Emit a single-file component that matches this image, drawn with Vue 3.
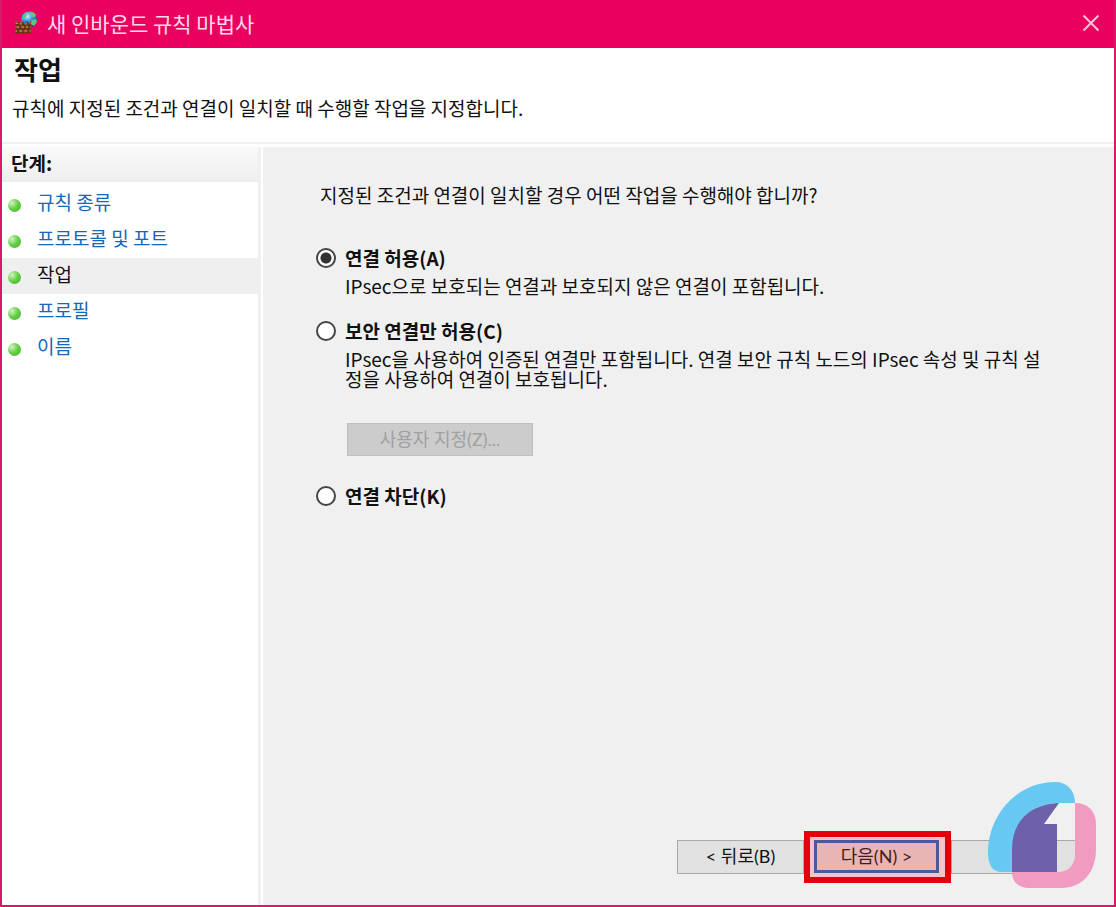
<script setup>
import { ref } from 'vue'

const steps = ['규칙 종류', '프로토콜 및 포트', '작업', '프로필', '이름']
const current = ref(2)
const action = ref('allow')
</script>

<template>
  <div class="window">
    <header class="titlebar">
      <svg class="app-icon" viewBox="0 0 24 24" aria-hidden="true">
        <defs>
          <radialGradient id="globe" cx="0.4" cy="0.3" r="0.75">
            <stop offset="0" stop-color="#c8f0ff" />
            <stop offset="0.4" stop-color="#3a9be0" />
            <stop offset="1" stop-color="#123f8c" />
          </radialGradient>
        </defs>
        <circle cx="15" cy="8.500" r="8" fill="url(#globe)" />
        <path d="M15 1c3-1 6 1 7 3l-2 3-3-2zM18 9l4-1 1 3-3 4-3-2zM9 4l4-2-1 4-4 3z" fill="#62c47c" />
        <path d="M1 10h3v2h2v-2h3v2h2v-2h3v2h2v-2h1v13H1z" fill="#9a5228" />
        <path d="M1 14h16M1 18h16M1 22h16M4 11v3M9 11v3M14 11v3M6 14v4M11 14v4M15 14v4M4 18v4M9 18v4M14 18v4" stroke="#4a2412" fill="none" />
        <path d="M2 12.500h2M6 13h2M11 13h2M3 16h2M8 16h2M12 16h2M2 20h1M6 20h2M11 20h2" stroke="#c98852" fill="none" />
      </svg>
      <span class="caption">새 인바운드 규칙 마법사</span>
      <button class="close" type="button" aria-label="닫기">
        <svg viewBox="0 0 18 18"><path d="M1.500 1.500l15 15M16.500 1.500l-15 15" /></svg>
      </button>
    </header>

    <div class="heading">
      <h1>작업</h1>
      <p>규칙에 지정된 조건과 연결이 일치할 때 수행할 작업을 지정합니다.</p>
    </div>

    <div class="body">
      <nav class="steps" aria-labelledby="steps-title">
        <h2 id="steps-title">단계:</h2>
        <ul>
          <li v-for="(step, i) in steps" :key="step" :class="{ current: i === current }">
            <span class="dot"></span>
            <span v-if="i === current" aria-current="step">{{ step }}</span>
            <a v-else href="#" @click.prevent="current = i">{{ step }}</a>
          </li>
        </ul>
      </nav>

      <main class="page">
        <fieldset class="choices">
          <legend>지정된 조건과 연결이 일치할 경우 어떤 작업을 수행해야 합니까?</legend>

          <div class="choice">
            <input id="allow" v-model="action" type="radio" name="action" value="allow" />
            <div class="choice-text">
              <label for="allow">연결 허용(A)</label>
              <p>IPsec으로 보호되는 연결과 보호되지 않은 연결이 포함됩니다.</p>
            </div>
          </div>

          <div class="choice">
            <input id="secure" v-model="action" type="radio" name="action" value="secure" />
            <div class="choice-text">
              <label for="secure">보안 연결만 허용(C)</label>
              <p>IPsec을 사용하여 인증된 연결만 포함됩니다. 연결 보안 규칙 노드의 IPsec 속성 및 규칙 설정을 사용하여 연결이 보호됩니다.</p>
              <button class="customize" type="button" :disabled="action !== 'secure'">사용자 지정(Z)...</button>
            </div>
          </div>

          <div class="choice">
            <input id="block" v-model="action" type="radio" name="action" value="block" />
            <div class="choice-text">
              <label for="block">연결 차단(K)</label>
            </div>
          </div>
        </fieldset>

        <footer class="actions">
          <button class="btn" type="button">&lt; 뒤로(B)</button>
          <div class="marked">
            <button class="btn next" type="button">다음(N) &gt;</button>
          </div>
          <button class="btn" type="button" aria-label="취소"></button>
        </footer>

        <svg class="logo" viewBox="0 0 110 108" aria-hidden="true">
          <path d="M68 1C80 1 88 9 88 22H73C45 22 25 42 25 70V91H15C5 91 1 83 1 72C1 34 30 1 68 1Z" fill="#67c9f2" />
          <path d="M88 22C101 22 109 30 109 43V68C109 92 95 107 74 107H43C31 107 25 101 25 91H70C82 91 88 84 88 72Z" fill="#f29bc1" />
          <path d="M72 22L57 43H70V91H25V68C25 41 43 23 72 22Z" fill="#6e60aa" />
        </svg>
      </main>
    </div>
  </div>
</template>

<style>
body {
  margin: 0;
}
</style>

<style scoped>
.window,
.window * {
  box-sizing: border-box;
}
.window {
  display: flex;
  flex-direction: column;
  min-height: 100vh;
  border: 2px solid #d81b68;
  border-top: 0;
  background: #fff;
  color: #111;
  font: 19px/20px "Noto Sans CJK KR", sans-serif;
}
h1, h2, p, ul {
  margin: 0;
  padding: 0;
}
button {
  font: 18px/20px Lato, "Noto Sans CJK KR", sans-serif;
}
.titlebar {
  display: flex;
  align-items: center;
  height: 48px;
  padding: 0 14px 2px 12px;
  background: #ea005e;
  color: #ffd9e8;
}
.app-icon {
  width: 24px;
  height: 24px;
  margin-right: 9px;
}
.caption {
  flex: 1;
  font-size: 21px;
  line-height: 24px;
}
.close {
  display: flex;
  padding: 0;
  border: 0;
  background: none;
}
.close svg {
  width: 18px;
  height: 18px;
  fill: none;
  stroke: #ffc4dc;
  stroke-width: 2;
}
.heading {
  height: 96px;
  padding: 6px 10px 0;
  border-bottom: 2px solid #f0f0f0;
}
h1 {
  padding-left: 2px;
  font-size: 26px;
  line-height: 30px;
}
.heading p {
  margin-top: 14px;
}
.body {
  display: flex;
  flex: 1;
  padding-top: 3px;
}
.steps {
  flex: 0 0 259px;
  border-right: 3px solid #f0f0f0;
}
h2 {
  height: 35px;
  padding: 6px 9px;
  background: linear-gradient(#fafafa, #eee);
  font-size: 19px;
  line-height: 20px;
}
ul {
  margin-top: 4px;
  list-style: none;
}
li {
  display: flex;
  align-items: center;
  gap: 16px;
  height: 36px;
  padding: 0 6px 4px;
}
li.current {
  background: #efefef;
}
.dot {
  width: 13px;
  height: 13px;
  margin-top: 6px;
  border-radius: 50%;
  background: radial-gradient(circle at 30% 30%, #d2f3c5, #5fce3e 50%, #45ae2b);
}
a {
  color: #1468b8;
  text-decoration: none;
}
.page {
  position: relative;
  display: flex;
  flex: 1;
  flex-direction: column;
  justify-content: space-between;
  margin-left: 2px;
  padding: 38px 36px 22px 53px;
  background: #f0f0f0;
}
.choices {
  min-width: 0;
  margin: 0;
  padding: 0;
  border: 0;
}
legend {
  margin-bottom: 42px;
  padding: 0 0 0 4px;
}
.choice {
  display: flex;
  gap: 9px;
}
.choice + .choice {
  margin-top: 24px;
}
.choice input {
  flex: none;
  appearance: none;
  width: 20px;
  height: 20px;
  margin: 1px 0 0;
  border: 2px solid #444;
  border-radius: 50%;
  background: #fff;
}
.choice input:checked {
  background: radial-gradient(circle, #333 5px, #fff 6px);
}
.choice-text {
  max-width: 702px;
}
label {
  display: block;
  font-weight: bold;
  line-height: 22px;
}
.choice-text p {
  margin-top: 7px;
}
.customize {
  display: block;
  width: 186px;
  height: 33px;
  margin: 34px 0 29px 2px;
  padding: 0 0 2px;
  border: 1px solid #bfbfbf;
  background: #ccc;
}
.choice:has(.customize) + .choice {
  margin-top: 0;
}
.customize:disabled {
  color: #a0a0a0;
}
.actions {
  display: flex;
  align-items: center;
  justify-content: flex-end;
}
.btn {
  width: 127px;
  height: 34px;
  padding: 0 0 2px;
  border: 1px solid #a8a8a8;
  background: #e1e1e1;
  color: #111;
}
.marked {
  padding: 3px 6px 4px 4px;
  border: 6px solid #e60009;
  background: #f5c2c6;
}
.next {
  display: block;
  width: 125px;
  height: 33px;
  border: 3px solid #465b9d;
  background: #e8b4b4;
  color: #431c22;
}
.logo {
  position: absolute;
  right: 17px;
  bottom: 16px;
  width: 110px;
  height: 108px;
}
</style>
